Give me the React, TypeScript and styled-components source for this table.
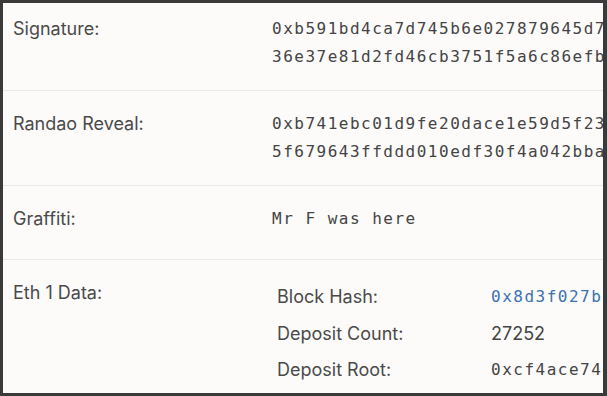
import React from 'react'
import styled, { createGlobalStyle } from 'styled-components'

const GlobalStyle = createGlobalStyle`
  html, body {
    margin: 0;
    padding: 0;
    background: #3a3a3a;
  }
  body {
    font-family: Inter, "Liberation Sans", sans-serif;
  }
`

const Frame = styled.div`
  width: 607px;
  height: 396px;
  padding: 3px 4px 3px 3px;
  box-sizing: border-box;
  background: #3a3a3a;
`

const Card = styled.div`
  width: 600px;
  height: 390px;
  overflow: hidden;
  background: #fcfbfa;
`

// scrolled a few pixels down, so the first row is cut at the top
const List = styled.div`
  margin-top: -7px;
  width: 1400px;
`

const Row = styled.div<{ $minHeight?: number }>`
  display: grid;
  grid-template-columns: 259px 1fr;
  padding: 19px 10px;
  min-height: ${({ $minHeight }) => ($minHeight ? `${$minHeight}px` : 'auto')};
  border-bottom: 1px solid #e9e8e7;
  &:last-child {
    border-bottom: none;
  }
`

const Label = styled.div`
  font-size: 18px;
  line-height: 28px;
  color: #4a4a4a;
`

const Mono = styled.div<{ $link?: boolean }>`
  font-family: "DejaVu Sans Mono", "Liberation Mono", monospace;
  font-size: 16px;
  line-height: 28px;
  letter-spacing: 1.5px;
  white-space: nowrap;
  color: ${({ $link }) => ($link ? '#3a72b0' : '#444444')};
`

const SubTable = styled.div`
  display: grid;
  grid-template-columns: 214px 1fr;
`

const SubCell = styled.div`
  padding: 4px 5px;
  font-size: 18px;
  line-height: 28.7px;
  color: #4a4a4a;
`

const Plain = styled.span`
  color: #444444;
`

const SIG = [
  '0xb591bd4ca7d745b6e027879645d7a3c9e1f04b82d6c5e9a71b3f0d28e4c6a95b17d2e80f3c4a6b9d1e5f7028c3b4a',
  '36e37e81d2fd46cb3751f5a6c86efb2a9c04d7e3b1f58a6c2d90e4b7f13a5c8d6e29b0f4a7c1d3e58b9f2a6c0d4e7b1',
]
const RANDAO = [
  '0xb741ebc01d9fe20dace1e59d5f23c8a4b6e09d17f2a5c3b8e0d4f61a9c7b2e5d3f08a4c6b1e9d72f5a3c0b8e4d6f1',
  '5f679643ffddd010edf30f4a042bba7e1c5d9b3f60a28e4c7d1b9f35a0e6c2d84b7f1a3e9c5d0b2f8a64e1c7d3b9f05',
]

function HexValue({ lines }: { lines: string[] }) {
  return (
    <div>
      {lines.map((line, i) => (
        <Mono key={i}>{line}</Mono>
      ))}
    </div>
  )
}

export default function App() {
  return (
    <>
      <GlobalStyle />
      <Frame>
        <Card>
          <List>
            <Row>
              <Label>Signature:</Label>
              <HexValue lines={SIG} />
            </Row>
            <Row>
              <Label>Randao Reveal:</Label>
              <HexValue lines={RANDAO} />
            </Row>
            <Row $minHeight={35}>
              <Label>Graffiti:</Label>
              <Mono>Mr F was here</Mono>
            </Row>
            <Row>
              <Label>Eth 1 Data:</Label>
              <SubTable>
                <SubCell>Block Hash:</SubCell>
                <SubCell>
                  <Mono $link>0x8d3f027bc4e1a9d26f5b0c83e7d4a1f9b62c05e8d3a7f41b9c6e2d0a85f3b7c4</Mono>
                </SubCell>
                <SubCell>Deposit Count:</SubCell>
                <SubCell>
                  <Plain>27252</Plain>
                </SubCell>
                <SubCell>Deposit Root:</SubCell>
                <SubCell>
                  <Mono>0xcf4ace74d9b2e61a3f8c05d7b4e92a6c1f3d8b05e7a49c2d6f1b83e0a5c7d94b</Mono>
                </SubCell>
              </SubTable>
            </Row>
          </List>
        </Card>
      </Frame>
    </>
  )
}
